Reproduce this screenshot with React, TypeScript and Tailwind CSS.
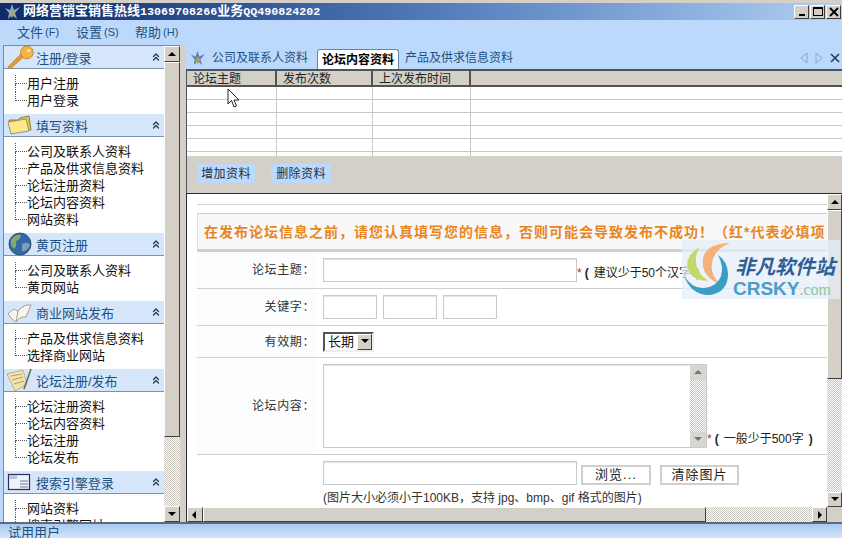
import React from "react";
import { ChevronsUp } from "lucide-react";

const FONT = "font-['Liberation_Sans','Noto_Sans_CJK_SC',sans-serif]";
const CHECKER = "bg-[repeating-conic-gradient(#c8c4bc_0_25%,#ffffff_0_50%)] bg-[length:2px_2px]";
const BEVEL = "border border-t-white border-l-white border-r-[#404040] border-b-[#404040] bg-[#d4d0c8]";

const KeyIcon = () => (
  <svg width="30" height="24" viewBox="0 0 33 26">
    <path d="M2 24 L16 10 L19 13 L5 26 Z" fill="#e59a2c" stroke="#a86512" strokeWidth="0.6" />
    <circle cx="23" cy="8" r="7" fill="#f2b544" stroke="#b8741a" strokeWidth="0.8" />
    <circle cx="25" cy="6" r="1.6" fill="#fff3c4" />
  </svg>
);
const FolderIcon = () => (
  <svg width="30" height="24" viewBox="0 0 30 24">
    <path d="M3 7 L12 7 L14 5 L23 3 L25 17 L6 20 Z" fill="#e6c64a" stroke="#5c5740" strokeWidth="0.7" />
    <path d="M2 9 L20 6 L23 18 L5 21 Z" fill="#fbe98b" stroke="#7a7250" strokeWidth="0.7" />
  </svg>
);
const GlobeIcon = () => (
  <svg width="30" height="24" viewBox="0 0 30 24">
    <circle cx="14" cy="12" r="11" fill="#2f6aa8" stroke="#35506e" />
    <path d="M5 8 Q9 2 15 3 Q14 8 10 9 Q11 14 8 17 Q4 13 5 8 Z" fill="#8aa66c" />
    <path d="M16 12 Q22 9 24 13 Q21 20 16 19 Z" fill="#7e9ec0" />
  </svg>
);
const BookIcon = () => (
  <svg width="30" height="24" viewBox="0 0 30 24">
    <path d="M2 14 Q7 7 12 11 Q18 4 25 5 L20 17 Q14 16 10 22 Q5 19 2 14 Z" fill="#f8f6ec" stroke="#8b8a80" strokeWidth="0.8" />
    <path d="M12 11 L10 22" stroke="#8b8a80" strokeWidth="0.8" />
  </svg>
);
const NotesIcon = () => (
  <svg width="30" height="24" viewBox="0 0 30 24">
    <path d="M1 6 L17 2 L21 16 L9 23 Z" fill="#f1e3b0" stroke="#a8996a" strokeWidth="0.7" />
    <path d="M5 8 L16 6 M6 12 L17 9 M8 16 L18 13" stroke="#b3a16a" strokeWidth="1.2" />
    <path d="M25 1 L18 21" stroke="#6a6a5a" strokeWidth="1.6" />
  </svg>
);
const CardIcon = () => (
  <svg width="30" height="24" viewBox="0 0 30 24">
    <rect x="2.5" y="4.5" width="21" height="15" fill="#eef1f8" stroke="#26305e" strokeWidth="1.2" />
    <rect x="3" y="5" width="8" height="4" fill="#b9c6e2" />
    <path d="M14 11 H22 M14 14 H22 M14 17 H22" stroke="#707a92" strokeWidth="1" />
  </svg>
);

const TreeRow = ({ label, last }: { label: string; last: boolean }) => (
  <div className="flex h-[17px] items-stretch pl-[11px]">
    <div className="flex w-[12px] shrink-0 flex-col">
      <div className="h-[9px] border-b border-l border-dotted border-[#555]" />
      <div className={last ? "flex-1" : "flex-1 border-l border-dotted border-[#555]"} />
    </div>
    <span className="text-[13px] leading-[17px] whitespace-nowrap text-[#111]">{label}</span>
  </div>
);

const NavGroup = ({ icon, title, items }: { icon: React.ReactNode; title: string; items: string[] }) => (
  <div>
    <div className="flex h-[23px] items-center border-b border-[#7b93ad] bg-[#d5e6fb] pl-[2px]">
      <div className="w-[30px] shrink-0">{icon}</div>
      <span className="pt-[3px] text-[13px] whitespace-nowrap text-[#20507f]">{title}</span>
      <ChevronsUp size={12} strokeWidth={2.6} className="mr-[2px] ml-auto text-[#1c3a5e]" />
    </div>
    <div className="pt-[6px] pb-[5px]">
      {items.map((it, i) => (
        <TreeRow key={it} label={it} last={i === items.length - 1} />
      ))}
    </div>
  </div>
);

const Triangle = ({ dir, color = "#000" }: { dir: "up" | "down" | "left" | "right"; color?: string }) => {
  const pts = { up: "1,6 9,6 5,2", down: "1,2 9,2 5,6", left: "6,1 6,9 2,5", right: "3,1 3,9 7,5" }[dir];
  return (
    <svg width="10" height="10" viewBox="0 0 10 10" className={dir === "up" || dir === "down" ? "mt-[1px]" : ""}>
      <polygon points={pts} fill={color} />
    </svg>
  );
};

const ScrollBtn = ({ dir, className = "" }: { dir: "up" | "down" | "left" | "right"; className?: string }) => (
  <div className={`flex shrink-0 items-center justify-center ${BEVEL} ${className}`}>
    <Triangle dir={dir} />
  </div>
);

const WinBtn = ({ children }: { children: React.ReactNode }) => (
  <div className={`flex h-[14px] w-[15px] items-center justify-center ${BEVEL}`}>{children}</div>
);

const MenuItem = ({ label, hot }: { label: string; hot: string }) => (
  <span className="flex w-[41px] items-center whitespace-nowrap">
    {label}
    <span className="ml-[2px] text-[11px]">({hot})</span>
  </span>
);

const Cols = ({ h, border }: { h: string; border: string }) => (
  <div className={`flex ${h} ${border} bg-white`}>
    <div className="w-[90px] border-r border-[#c8c8c4]" />
    <div className="w-[96px] border-r border-[#c8c8c4]" />
    <div className="w-[98px] border-r border-[#c8c8c4]" />
    <div className="flex-1" />
  </div>
);

const HeaderCell = ({ label, w }: { label: string; w: string }) => (
  <div className={`${w} flex items-center border-r-2 border-[#55534e] pt-[1px] pl-[6px] text-[12px] whitespace-nowrap text-[#222]`}>
    {label}
  </div>
);

const FormRow = ({ label, h, children }: { label?: string; h: string; children: React.ReactNode }) => (
  <div className={`flex ${h} items-stretch border-b border-[#cfcfcf]`}>
    <div className="flex w-[118px] shrink-0 items-center justify-end bg-[#fbfdff] text-[12px] tracking-[0.6px] text-[#333]">
      {label}
    </div>
    <div className="flex min-w-0 flex-1 pl-[8px]">{children}</div>
  </div>
);

const TextBox = ({ w }: { w: string }) => (
  <div className={`${w} h-[24px] border border-[#c9c9c9] bg-white shadow-[inset_0_1px_1px_#e2e2e2]`} />
);

const Note = ({ text }: { text: string }) => (
  <span className="flex items-center text-[12px] whitespace-nowrap text-[#222]">
    <span className="text-[#b03030]">*</span>
    <span className="ml-[3px] font-bold">(</span>
    <span className="ml-[5px]">{text}</span>
    <span className="ml-[5px] font-bold">)</span>
  </span>
);

const FormBtn = ({ label, w }: { label: string; w: string }) => (
  <div className={`${w} flex h-[20px] items-center justify-center border-2 border-[#cfcfcb] bg-white text-[13px] tracking-[1px] text-[#222]`}>
    {label}
  </div>
);

const App = () => {
  return (
    <div className={`relative flex h-[538px] w-[842px] flex-col overflow-hidden bg-[#bcd9fb] ${FONT}`}>
      <div className="h-[3px] shrink-0 bg-[#d4d0c8]" />
      {/* title bar */}
      <div className="flex h-[17px] shrink-0 items-center bg-gradient-to-r from-[#0f2a68] via-[#4f78b8] to-[#b0d0f4] pr-[1px] pl-[4px]">
        <svg width="17" height="16" viewBox="0 0 17 16" className="shrink-0">
          <polygon points="8,0 10,6 16,3 11,9 13,15 8,11 4,15 5,9 1,4 6,6" fill="#8fa6c8" />
          <polygon points="8,6 11,9 8,14 6,10" fill="#b8a050" />
        </svg>
        <span className="ml-[2px] text-[13px] font-bold whitespace-nowrap text-white">
          网络营销宝销售热线
          <span className="font-['Liberation_Mono'] text-[11.7px]">13069708266</span>
          业务
          <span className="font-['Liberation_Mono'] text-[11.7px]">QQ490824202</span>
        </span>
        <div className="ml-auto flex gap-[1px]">
          <WinBtn>
            <div className="mt-[6px] h-[2px] w-[6px] bg-black" />
          </WinBtn>
          <WinBtn>
            <div className="h-[9px] w-[10px] border border-t-2 border-black" />
          </WinBtn>
          <WinBtn>
            <svg width="10" height="10" viewBox="0 0 10 10">
              <path d="M1 1 L9 9 M9 1 L1 9" stroke="#000" strokeWidth="1.8" />
            </svg>
          </WinBtn>
        </div>
      </div>
      {/* menu */}
      <div className="flex h-[25px] shrink-0 items-center gap-[18px] pl-[17px] text-[13px] text-[#20507f]">
        <MenuItem label="文件" hot="F" />
        <MenuItem label="设置" hot="S" />
        <MenuItem label="帮助" hot="H" />
      </div>
      {/* body */}
      <div className="flex h-[477px] shrink-0 pl-[3px]">
        {/* sidebar */}
        <div className="flex h-full w-[177px] shrink-0 overflow-hidden border-t border-l border-[#7d8a98]">
          <div className="w-[160px] shrink-0 overflow-hidden bg-white">
            <NavGroup icon={<KeyIcon />} title="注册/登录" items={["用户注册", "用户登录"]} />
            <NavGroup
              icon={<FolderIcon />}
              title="填写资料"
              items={["公司及联系人资料", "产品及供求信息资料", "论坛注册资料", "论坛内容资料", "网站资料"]}
            />
            <NavGroup icon={<GlobeIcon />} title="黄页注册" items={["公司及联系人资料", "黄页网站"]} />
            <NavGroup icon={<BookIcon />} title="商业网站发布" items={["产品及供求信息资料", "选择商业网站"]} />
            <NavGroup
              icon={<NotesIcon />}
              title="论坛注册/发布"
              items={["论坛注册资料", "论坛内容资料", "论坛注册", "论坛发布"]}
            />
            <NavGroup icon={<CardIcon />} title="搜索引擎登录" items={["网站资料", "搜索引擎网址"]} />
          </div>
          <div className="flex w-[16px] shrink-0 flex-col">
            <ScrollBtn dir="up" className="h-[16px]" />
            <div className={`h-[375px] ${BEVEL}`} />
            <div className={`flex-1 ${CHECKER}`} />
            <ScrollBtn dir="down" className="h-[16px]" />
          </div>
        </div>
        <div className="w-[6px] shrink-0 bg-[#d4d0c8]" />
        {/* main */}
        <div className="flex min-w-0 flex-1 flex-col">
          {/* tabs */}
          <div className="flex h-[24px] shrink-0 items-end pl-[4px]">
            <svg width="16" height="17" viewBox="0 0 17 16" className="mb-[2px] shrink-0">
              <polygon points="8,0 10,6 16,3 11,9 13,15 8,11 4,15 5,9 1,4 6,6" fill="#5c80b8" />
              <polygon points="8,6 11,9 8,14 6,10" fill="#b8a050" />
            </svg>
            <span className="mb-[2px] ml-[6px] w-[105px] shrink-0 text-[12px] whitespace-nowrap text-[#20507f]">
              公司及联系人资料
            </span>
            <div className="flex h-[20px] w-[82px] shrink-0 items-center justify-center rounded-t-[3px] border-x border-t border-[#6a84a0] bg-white pt-[1px] text-[12px] font-bold whitespace-nowrap text-black">
              论坛内容资料
            </div>
            <span className="mb-[2px] ml-[6px] text-[12px] whitespace-nowrap text-[#20507f]">产品及供求信息资料</span>
            <div className="mb-[5px] ml-auto flex items-center gap-[7px] pr-[2px]">
              <svg width="8" height="12" viewBox="0 0 8 12">
                <path d="M7 1 L1 6 L7 11 Z" fill="none" stroke="#8fa8c4" />
              </svg>
              <svg width="8" height="12" viewBox="0 0 8 12">
                <path d="M1 1 L7 6 L1 11 Z" fill="none" stroke="#8fa8c4" />
              </svg>
              <svg width="10" height="10" viewBox="0 0 10 10">
                <path d="M1 1 L9 9 M9 1 L1 9" stroke="#1f3c68" strokeWidth="1.6" />
              </svg>
            </div>
          </div>
          {/* table */}
          <div className="h-[87px] shrink-0 overflow-hidden border-t-2 border-l border-[#4b5560] bg-white">
            <div className="flex h-[16px] border-b-2 border-[#55534e] bg-[#d4d0c8]">
              <HeaderCell label="论坛主题" w="w-[90px]" />
              <HeaderCell label="发布次数" w="w-[96px]" />
              <HeaderCell label="上次发布时间" w="w-[98px]" />
            </div>
            <Cols h="h-[13px]" border="border-b border-[#c8c8c4]" />
            <Cols h="h-[13px]" border="border-b border-[#c8c8c4]" />
            <Cols h="h-[13px]" border="border-b border-[#c8c8c4]" />
            <Cols h="h-[13px]" border="border-b border-[#c8c8c4]" />
            <Cols h="h-[13px]" border="border-b border-[#c8c8c4]" />
            <Cols h="h-[5px]" border="" />
          </div>
          {/* toolbar */}
          <div className="flex h-[37px] shrink-0 items-center gap-[16px] border-l border-[#4b5560] bg-[#d4d0c8] pb-[2px] pl-[10px]">
            <div className="flex h-[19px] w-[58px] items-center justify-center bg-[#bcd9fb] text-[12px] tracking-[0.4px] text-[#20303f]">
              增加资料
            </div>
            <div className="flex h-[19px] w-[60px] items-center justify-center bg-[#bcd9fb] text-[12px] tracking-[0.4px] text-[#20303f]">
              删除资料
            </div>
          </div>
          {/* form area */}
          <div className="flex min-h-0 flex-1 flex-col border-t border-l border-[#2b2b2b]">
            <div className="flex min-h-0 flex-1">
              <div className="min-w-0 flex-1 overflow-hidden bg-white pl-[10px]">
                <div className="mt-[10px] h-[9px] border-t border-[#d5d5d5]" />
                <div className="flex h-[39px] items-center overflow-hidden border-t border-b-[3px] border-l border-t-[#cfcfcf] border-b-[#cfcfcf] border-l-[#e0e0e0] bg-[#f8f8f8] pt-[1px] pl-[6px] text-[14px] font-bold tracking-[1px] whitespace-nowrap text-[#e8861e]">
                  在发布论坛信息之前，请您认真填写您的信息，否则可能会导致发布不成功！（红*代表必填项
                </div>
                <FormRow label="论坛主题：" h="h-[37px]">
                  <div className="flex items-end pb-[6px]">
                    <TextBox w="w-[254px]" />
                    <Note text="建议少于50个汉字" />
                  </div>
                </FormRow>
                <FormRow label="关键字：" h="h-[37px]">
                  <div className="flex items-center gap-[6px]">
                    <TextBox w="w-[54px]" />
                    <TextBox w="w-[54px]" />
                    <TextBox w="w-[54px]" />
                  </div>
                </FormRow>
                <FormRow label="有效期：" h="h-[32px]">
                  <div className="flex items-center">
                    <div className="flex h-[20px] w-[51px] items-center justify-between border-2 border-t-[#555] border-r-[#eee] border-b-[#eee] border-l-[#555] bg-white pl-[3px] text-[13px] text-[#111]">
                      长期
                      <div className={`flex h-[16px] w-[15px] items-center justify-center ${BEVEL}`}>
                        <Triangle dir="down" />
                      </div>
                    </div>
                  </div>
                </FormRow>
                <FormRow label="论坛内容：" h="h-[97px]">
                  <div className="flex items-end pb-[6px]">
                    <div className="flex h-[84px] w-[384px] border border-[#c9c9c9] bg-white shadow-[inset_0_1px_1px_#e2e2e2]">
                      <div className="flex-1" />
                      <div className="flex w-[16px] flex-col">
                        <div className="flex h-[15px] items-center justify-center bg-[#d8d6d0]">
                          <Triangle dir="up" color="#77746c" />
                        </div>
                        <div className={`flex-1 ${CHECKER}`} />
                        <div className="flex h-[15px] items-center justify-center bg-[#d8d6d0]">
                          <Triangle dir="down" color="#77746c" />
                        </div>
                      </div>
                    </div>
                    <Note text="一般少于500字" />
                  </div>
                </FormRow>
                <div className="flex pt-[6px] pl-[126px]">
                  <div>
                    <div className="flex items-end">
                      <TextBox w="w-[254px]" />
                      <div className="ml-[4px] flex gap-[9px]">
                        <FormBtn label="浏览..." w="w-[70px]" />
                        <FormBtn label="清除图片" w="w-[79px]" />
                      </div>
                    </div>
                    <div className="mt-[4px] text-[12px] whitespace-nowrap text-[#333]">
                      (图片大小必须小于100KB，支持 jpg、bmp、gif 格式的图片)
                    </div>
                  </div>
                </div>
              </div>
              <div className="flex w-[15px] shrink-0 flex-col">
                <ScrollBtn dir="up" className="h-[16px]" />
                <div className={`h-[169px] ${BEVEL}`} />
                <div className={`flex-1 ${CHECKER}`} />
                <ScrollBtn dir="down" className="h-[15px]" />
              </div>
            </div>
            {/* bottom scrollbar */}
            <div className="flex h-[15px] shrink-0 bg-[#d4d0c8]">
              <ScrollBtn dir="left" className="w-[16px]" />
              <div className={`w-[503px] ${BEVEL}`} />
              <div className={`flex-1 ${CHECKER}`} />
              <ScrollBtn dir="right" className="w-[15px]" />
              <div className="w-[15px]" />
            </div>
          </div>
        </div>
      </div>
      {/* status bar */}
      <div className="h-[2px] shrink-0 bg-[#5d6b78]" />
      <div className="flex min-h-0 flex-1 items-start overflow-hidden bg-gradient-to-b from-[#a9c9f0] to-[#d3e5fb] pl-[8px] text-[13px] leading-[18px] whitespace-nowrap text-[#20507f]">
        试用用户
      </div>

      {/* mouse cursor */}
      <svg width="14" height="22" viewBox="0 0 14 22" className="absolute top-[88px] left-[227px]">
        <path d="M1 1 L1 16 L4.5 12.5 L7 19 L9.5 18 L7 12 L12 12 Z" fill="#fff" stroke="#222" strokeWidth="1" />
      </svg>

      {/* watermark */}
      <div className="absolute top-[240px] left-[682px] flex h-[59px] w-[158px] bg-[#e4eef8]/75">
        <svg width="50" height="59" viewBox="0 0 50 59" className="shrink-0">
          <path d="M18 7 Q2 16 6 30 Q10 40 26 41 Q14 32 14 22 Q13 14 18 7 Z" fill="#c4d86a" />
          <path d="M48 3 Q18 4 21 26 Q23 38 38 44 Q28 34 30 24 Q31 10 48 3 Z" fill="#f2b27a" />
          <path d="M2 36 Q10 56 28 55 Q46 52 46 34 Q46 22 36 15 Q42 26 39 36 Q34 48 20 48 Q10 48 2 36 Z" fill="#3b9cc4" />
        </svg>
        <div className="flex flex-col pt-[16px]">
          <span className="pl-[3px] text-[20px] leading-[22px] font-bold whitespace-nowrap text-[#2e5f96] italic">
            非凡软件站
          </span>
          <span className="mt-[1px] pl-[1px] text-[19px] leading-[20px] font-bold whitespace-nowrap text-[#4d9cc8]">
            CRSKY<span className="font-['Liberation_Serif'] text-[16px] font-normal text-[#8fc79a]">.com</span>
          </span>
        </div>
      </div>
    </div>
  );
};

export default App;
